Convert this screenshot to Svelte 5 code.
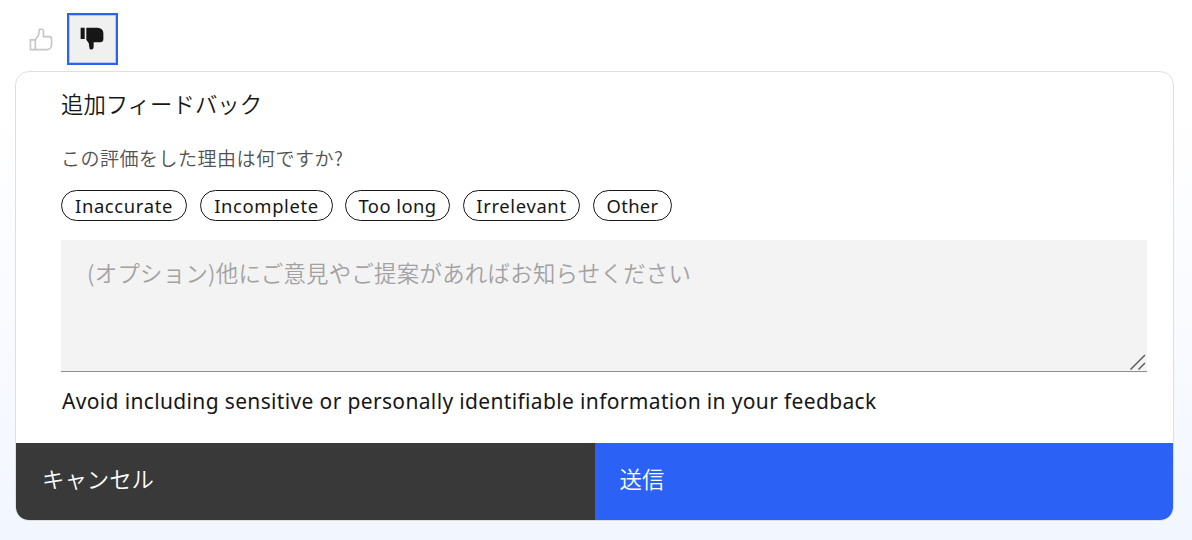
<script>
  const reasons = [
    { label: 'Inaccurate', width: 126 },
    { label: 'Incomplete', width: 133 },
    { label: 'Too long', width: 105 },
    { label: 'Irrelevant', width: 117 },
    { label: 'Other', width: 79 }
  ];
</script>

<main>
  <div class="votes">
    <button class="vote" aria-label="Like">
      <svg width="26" height="26" viewBox="0 0 32 32" fill="#c6c6c6"><path d="M26 12h-6V6a3 3 0 0 0-3-3h-2.133a2.01 2.01 0 0 0-1.98 1.717l-.845 5.917L8.465 16H2v14h21a7.008 7.008 0 0 0 7-7v-7a4.005 4.005 0 0 0-4-4ZM8 28H4V18h4Zm20-5a5.006 5.006 0 0 1-5 5H10V17.303l3.958-5.937L14.867 5H17a1 1 0 0 1 1 1v8h8a2.003 2.003 0 0 1 2 2Z" /></svg>
    </button>
    <button class="vote selected" aria-label="Dislike">
      <svg width="26" height="26" viewBox="0 0 32 32" fill="#161616"><path d="M2 2h5v14H2zM23 2H9v14.803l3.042 4.563.845 5.917A2.01 2.01 0 0 0 14.867 29H15a3 3 0 0 0 3-3v-6h8a4.005 4.005 0 0 0 4-4V9a7.008 7.008 0 0 0-7-7Z" /></svg>
    </button>
  </div>

  <section class="card">
    <div class="content">
      <h2>追加フィードバック</h2>
      <p class="prompt">この評価をした理由は何ですか?</p>
      <div class="chips">
        {#each reasons as reason}
          <button class="chip" style:width="{reason.width}px">{reason.label}</button>
        {/each}
      </div>
      <div class="field">
        <span>(オプション)他にご意見やご提案があればお知らせください</span>
        <svg class="grip" width="18" height="18" viewBox="0 0 18 18" fill="none" stroke="#5c5c5c" stroke-width="1.5"><path d="M1.5 16.5 16 2M9.5 16.5 16 10" /></svg>
      </div>
      <p class="notice">Avoid including sensitive or personally identifiable information in your feedback</p>
    </div>
    <footer>
      <button class="cancel">キャンセル</button>
      <button class="submit">送信</button>
    </footer>
  </section>
</main>

<style>
  :global(body) { margin: 0; }
  * { box-sizing: border-box; }
  main {
    height: 540px;
    padding: 13px 18px 0 15px;
    overflow: hidden;
    background: linear-gradient(180deg, #fff 0%, #fff 20%, #f2f6ff 100%);
    color: #161616;
    font-family: "Noto Sans", "Noto Sans CJK JP", sans-serif;
  }
  button { margin: 0; border: 0; padding: 0; background: none; color: inherit; font: inherit; }
  .votes { display: flex; height: 58px; }
  .vote { display: flex; align-items: center; justify-content: center; width: 51px; height: 52px; }
  .vote svg { display: block; }
  .vote.selected { margin-left: 1px; border: 2px solid #2b62f6; background: #f0f0f0; box-shadow: inset 0 0 0 1px #b9c8f3; }
  .vote.selected svg { margin: 0 2px 1px 0; }
  .card {
    display: flex;
    flex-direction: column;
    height: 450px;
    border: 1px solid #dfdfe1;
    border-radius: 14px;
    overflow: hidden;
    background: #fff;
  }
  .content { height: 371px; padding: 14px 26px 0 45px; }
  h2, p { margin: 0; font-weight: 400; white-space: nowrap; }
  h2 { height: 34px; font-family: "Noto Sans CJK JP", sans-serif; font-size: 22.4px; line-height: 34px; font-weight: 350; }
  .prompt { height: 28px; margin-top: 24px; color: #525252; font-family: "Noto Sans CJK JP", sans-serif; font-size: 19px; line-height: 28px; letter-spacing: .5px; font-weight: 350; }
  .chips { display: flex; gap: 13px; height: 31px; margin-top: 18px; }
  .chip { height: 31px; padding-top: 1px; border: 1px solid #161616; border-radius: 16px; font-size: 18.4px; line-height: 28px; letter-spacing: .65px; white-space: nowrap; }
  .chip:nth-child(3) { margin-left: -1px; letter-spacing: .45px; }
  .chip:last-child { letter-spacing: .3px; }
  .field {
    position: relative;
    height: 132px;
    margin-top: 19px;
    padding: 15px 26px;
    border-bottom: 1px solid #8d8d8d;
    background: #f3f3f3;
    color: #a2a2a2;
    font-family: "Noto Sans CJK JP", sans-serif;
    font-size: 22.4px;
    font-weight: 350;
    line-height: 34px;
    letter-spacing: .29px;
    white-space: nowrap;
  }
  .grip { position: absolute; right: 0; bottom: 0; }
  .notice { margin-top: 12px; padding-left: 1px; font-size: 21px; line-height: 34px; letter-spacing: .35px; }
  footer { display: flex; height: 77px; color: #fff; font-family: "Noto Sans CJK JP", sans-serif; font-size: 22.4px; font-weight: 350; }
  footer button { height: 77px; padding: 0 0 7px 26px; text-align: left; }
  .cancel { width: 579px; background: #393939; }
  .submit { flex: 1; padding-left: 24.5px; background: #2b61f5; }
</style>
